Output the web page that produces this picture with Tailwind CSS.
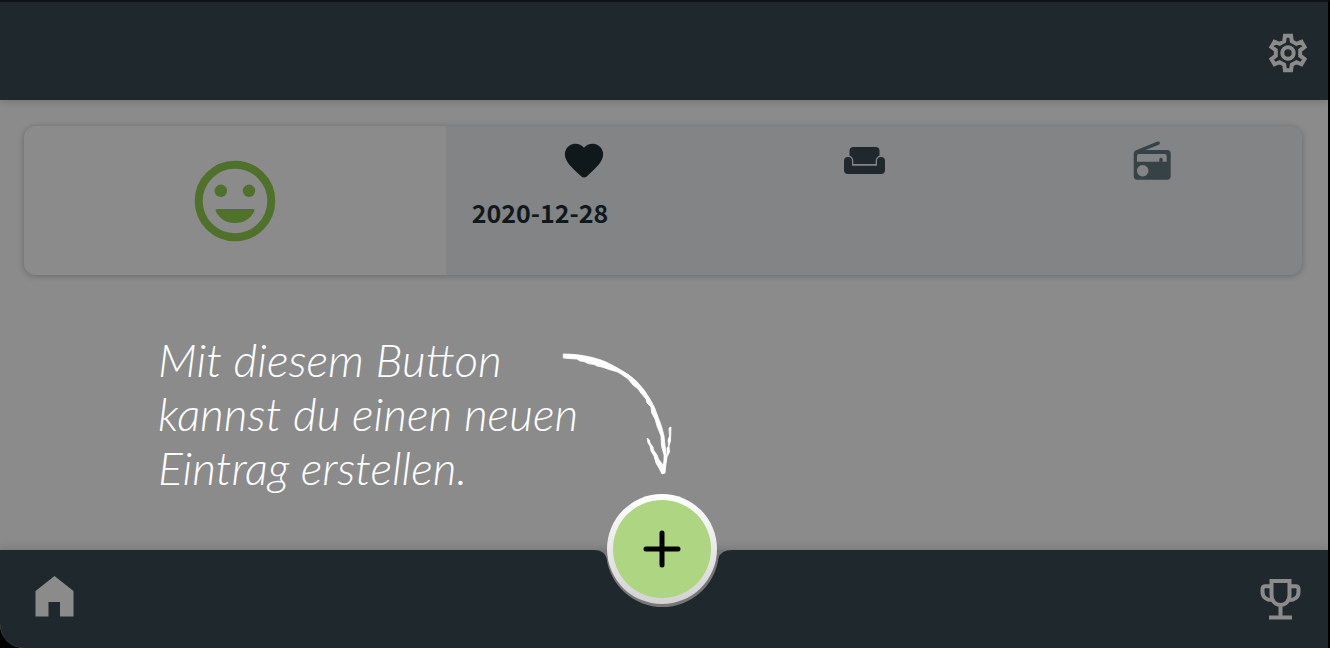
<!DOCTYPE html>
<html lang="de">
<head>
<meta charset="utf-8">
<meta name="viewport" content="width=device-width, initial-scale=1">
<title>Tagebuch</title>
<script src="https://cdn.jsdelivr.net/npm/@tailwindcss/browser@4"></script>
</head>
<body class="bg-black">
<div class="flex min-h-screen flex-col overflow-hidden rounded-bl-3xl border-t-2 border-r-2 border-t-[#0c1215] border-r-black bg-[#8b8b8b]">
  <header class="flex h-[98px] shrink-0 items-center justify-end bg-[#1f282d] px-4 pt-1 shadow-[0_1px_8px_rgba(0,0,0,0.2)]">
    <button type="button" aria-label="Einstellungen" class="text-[#8b8b8b]">
      <svg class="size-12" viewBox="-0.6 -0.6 25.2 25.2" fill="none" stroke="currentColor" stroke-width="2.100">
        <path d="M10.4 3h3.2l.4 2.8 2.4 1.4 2.7-1.1 1.6 2.7-2.3 1.8v2.8l2.3 1.8-1.6 2.7-2.7-1.1-2.4 1.4-.4 2.8h-3.2l-.4-2.8-2.4-1.4-2.7 1.1-1.6-2.7 2.3-1.8v-2.8L3.3 8.8l1.6-2.7 2.7 1.1L10 5.8Z"/>
        <circle cx="12" cy="12" r="3"/>
      </svg>
    </button>
  </header>

  <main class="flex-1 pt-[26px] pr-[26px] pl-6">
    <article class="flex h-[149px] overflow-hidden rounded-xl bg-[#828485] shadow-[0_1px_6px_rgba(0,0,0,0.25)]">
      <div class="flex w-[33%] items-center justify-center bg-[#8b8b8b]">
        <svg class="size-[82px]" viewBox="0 0 82 82" fill="#4f712b" role="img" aria-label="Sehr gut">
          <circle cx="41" cy="41" r="36.3" fill="none" stroke="#4f712b" stroke-width="8"/>
          <circle cx="26.8" cy="30.8" r="6.2"/><circle cx="55" cy="30.8" r="6.2"/>
          <path d="M23 49h36q2 0 1.3 2C57 58.500 50 63 41 63S25 58.500 21.700 51Q21 49 23 49Z"/>
        </svg>
      </div>
      <div class="flex-1">
        <div class="grid h-[69px] grid-cols-[278fr_284fr_292fr] place-items-center pr-1">
          <svg class="size-[46px] text-[#0f191c]" viewBox="0 0 24 24" fill="currentColor"><path d="M13.35 20.13c-.76.69-1.93.69-2.69-.01l-.11-.1C5.3 15.27 1.87 12.16 2 8.28c.06-1.7.93-3.33 2.34-4.29 2.64-1.8 5.9-.96 7.66 1.1 1.76-2.06 5.02-2.91 7.66-1.1 1.41.96 2.28 2.59 2.34 4.29.14 3.88-3.3 6.99-8.55 11.76l-.1.09z"/></svg>
          <svg class="h-[27px] w-[41px] text-[#1f282d]" viewBox="0 0 41 27" fill="currentColor"><path d="M9.500 0h22q4 0 4 4v4.500q-3.800 1.500-3.800 5.500v3H9.300v-3q0-4-3.800-5.500V4q0-4 4-4Z"/><path d="M4 10q4 0 4 4v4.700h25V14q0-4 4-4t4 4v9q0 4-4 4H4q-4 0-4-4v-9q0-4 4-4Z"/></svg>
          <svg class="h-[39px] w-[38px] text-[#374247]" viewBox="0 0 38 39" fill="currentColor"><path fill-rule="evenodd" d="M2.500 9.500 24.500.6q1.800-.5 2.300 1t-1 2.200L12.500 9H34q3.700 0 3.700 3.700V35q0 3.700-3.700 3.700H4.400Q.7 38.700.7 35V12.500q0-2.200 1.800-3ZM6 13q-2 0-2 2v5.700h22.300V18.500q0-1.700 1.700-1.700t1.700 1.700v2.200h4V15q0-2-2-2ZM9.700 24a5.700 5.700 0 1 0 .01 0Z"/></svg>
        </div>
        <time datetime="2020-12-28" class="block pl-[26px] font-['Noto_Sans_CJK_SC','Noto_Sans',sans-serif] text-[25px] leading-[34px] font-bold text-[#0f191c]">2020-12-28</time>
      </div>
    </article>

    <div class="flex items-start pt-[58px] pl-[134px] text-white">
      <p class="w-[402px] font-['Lato',sans-serif] text-[46px] leading-[54px] font-light whitespace-nowrap italic">Mit diesem Button<br>kannst du einen neuen<br>Eintrag erstellen.</p>
      <svg class="mt-4 h-[130px] w-[120px] shrink-0" viewBox="0 0 120 130" fill="currentColor" stroke="currentColor" stroke-width="0.800" aria-hidden="true">
        <path d="M3.300 5C16 5 29 7 40 10.700C47 13 52 16 58 19.300Q69 25 77 32.700Q85 41 90 50Q95 58 98 68Q102 77 104 87L106 105L106 113L104 113L104 106L101.500 97L101 87L97 77L95 70L91.700 64L91 58L87 54L86 50L81.700 45L78 40L73 36L68 30L61 25L56.700 22.700L49 20.500L43 18.300L37 17L34 15.500L28 14.500L24 12.500L20 12L17 10L11 9.700L3.300 9Z"/>
        <path d="M87 89L89.500 91L90 94L93 98L93.500 101L97 106L98.500 110L103 116L105.500 107L107 105L107 99L108.500 97L108 91L109.500 87L109 79L111 78L110.500 92L109 97L109.500 103L107 108L106 115L105 124L102 125L99.500 120L96 114L94 107L91 102L90 97L88 94Z"/>
      </svg>
    </div>
  </main>

  <footer class="flex h-[98px] shrink-0 shadow-[0_0_10px_rgba(0,0,0,0.2)]">
    <nav class="flex flex-1 items-center bg-[#1f282d]">
      <a href="#start" aria-label="Startseite" class="ml-[35px] text-[#8b8b8b]">
        <svg class="mb-1.5 h-[41px] w-[39px]" viewBox="0 0 39 41" fill="currentColor"><path d="M19.500 0 38.500 15v25.500H25V26H13.500v14.500H.5V15Z"/></svg>
      </a>
    </nav>
    <div class="relative w-[140px]">
      <svg class="size-full" viewBox="0 0 140 98" preserveAspectRatio="none"><path fill="#777" d="M0 0h140v60H0Z"/><path fill="#1f282d" d="M0 0C7 0 11 3 12.500 8A56.500 56.500 0 0 0 124.500 8Q127 0 138 0H140V98H0Z"/></svg>
      <button type="button" aria-label="Neuer Eintrag" class="absolute -top-14 left-[13px] size-[110px] rounded-full bg-linear-to-b from-white to-[#d2d2d2] p-[6px]">
        <span class="flex size-full items-center justify-center rounded-full bg-[#aed581]">
          <svg class="size-[38px]" viewBox="0 0 38 38" stroke="#000" stroke-width="5" stroke-linecap="round"><path d="M19 3v32M3 19h32"/></svg>
        </span>
      </button>
    </div>
    <nav class="flex flex-1 items-center justify-end bg-[#1f282d]">
      <a href="#erfolge" aria-label="Erfolge" class="mr-[27px] text-[#8b8b8b]">
        <svg class="size-[41px]" viewBox="0 0 41 41" fill="none" stroke="currentColor" stroke-width="4"><path d="M11.500 2h18v14c0 6-4 10-9 10s-9-4-9-10ZM20.500 26v12M9 38.500h23M11.500 7.300H5.300Q2.500 7.300 2.500 10v3c0 5 4 8 9.500 8M29.500 7.300h6.200q2.800 0 2.800 2.700v3c0 5-4 8-9.500 8"/></svg>
      </a>
    </nav>
  </footer>
</div>
</body>
</html>
